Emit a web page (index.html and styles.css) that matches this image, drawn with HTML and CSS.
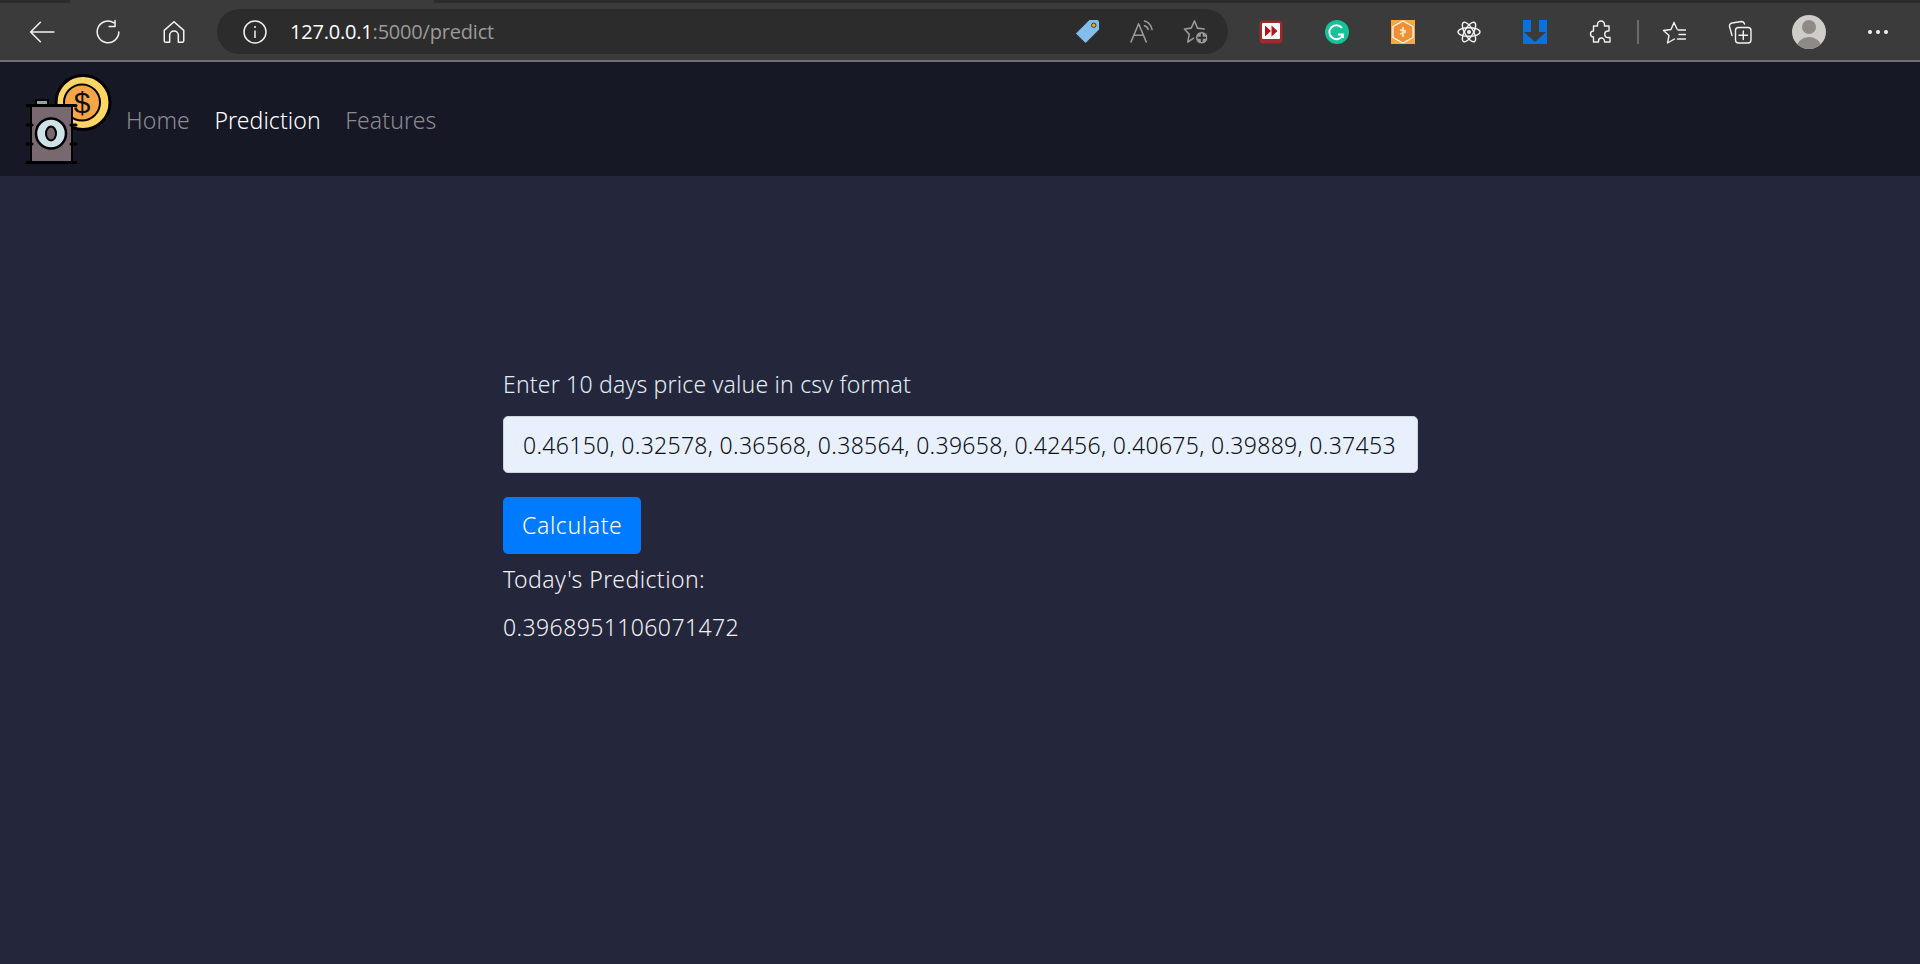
FILE: index.html
```html
<!DOCTYPE html>
<html lang="en">
<head>
<meta charset="utf-8">
<title>Prediction</title>
<link rel="stylesheet" href="styles.css">
</head>
<body>
<header class="chrome">
  <div class="tabstrip"><span class="tab"></span></div>
  <div class="toolbar">
    <svg class="ic ic-first" viewBox="0 0 24 24"><path d="M23 12H1.500M10.500 3 1.500 12l9 9"/></svg>
    <svg class="ic" viewBox="0 0 24 24"><path d="M17.500 3.500a10 10 0 1 0 4.500 8.500M18.500 1.500V7H13"/></svg>
    <svg class="ic" viewBox="0 0 24 24"><path d="M3 10.500 12 2.500l9 8V20a1.500 1.500 0 0 1-1.500 1.500H16V15a4 4 0 0 0-8 0v6.500H4.500A1.500 1.500 0 0 1 3 20z"/></svg>
    <div class="omnibox">
      <svg class="ic-info" viewBox="0 0 24 24"><circle cx="12" cy="12" r="11"/><path d="M12 10.500V18M12 6v2"/></svg>
      <span class="url"><span class="host">127.0.0.1</span>:5000/predict</span>
      <div class="omni-right">
        <svg class="ic-s" viewBox="0 0 26 26"><path class="tag" d="M15 1h8a2 2 0 0 1 2 2v8L11 25 1 15z"/><circle class="tag-dot" cx="19.500" cy="6.500" r="2.300"/></svg>
        <svg class="ic-s dim" viewBox="0 0 26 26"><path d="M2 24 10 5l8 19M5 17h10M16 2c4 1 7 4 8 9M16 7c2 .5 3.500 2 4 4"/></svg>
        <svg class="ic-s dim" viewBox="0 0 26 26"><path d="M11 20 5 24l1.500-8L1.500 10.500l7-1L12 2l3 7.500 7 1"/><circle class="plus-bg" cx="19.500" cy="19.500" r="6.500"/><path class="plus" d="M19.500 16v7M16 19.500h7"/></svg>
      </div>
    </div>
    <div class="exts">
      <svg class="ext" viewBox="0 0 24 24"><rect class="e1a" width="23" height="23" x=".5" y=".5" rx="4"/><rect class="e1b" width="18" height="16" x="3" y="3" rx="1"/><path class="e1c" d="M6 5.500l6 5.500-6 5.500zM12.500 5.500l6 5.500-6 5.500z"/></svg>
      <svg class="ext" viewBox="0 0 24 24"><circle class="e2a" cx="12" cy="12" r="12"/><path class="e2b" d="M17 8a7 7 0 1 0 1 6.500h-5M18 18v-3.500"/></svg>
      <svg class="ext" viewBox="0 0 24 24"><rect class="e3a" width="24" height="24"/><path class="e3b" d="M12 1l10 5.500v11L12 23 2 17.500v-11z"/><path class="e3c" d="M12 7v10M9 10l6 1M9 14l6-2"/></svg>
      <svg class="ext" viewBox="0 0 24 24"><g class="e4"><ellipse cx="12" cy="12" rx="11" ry="4.300"/><ellipse cx="12" cy="12" rx="11" ry="4.300" transform="rotate(60 12 12)"/><ellipse cx="12" cy="12" rx="11" ry="4.300" transform="rotate(120 12 12)"/></g><circle class="e4d" cx="12" cy="12" r="2"/></svg>
      <svg class="ext" viewBox="0 0 24 24"><rect class="e5" width="24" height="24"/><path class="e5a" d="M8 0h8v12h7L12 22 1 12h7z"/></svg>
      <svg class="ic ic-ext" viewBox="0 0 24 24"><path d="M8.500 4.500a3.500 3.500 0 0 1 7 0V6H20v5h-1a3 3 0 0 0 0 6.500h2V22h-5.500v-1a3 3 0 0 0-6 0v1H4.500v-5a3 3 0 0 1 0-6V6h4z"/></svg>
      <span class="sep"></span>
      <svg class="ic ic-fav" viewBox="0 0 24 24"><path d="M12 2.500 9 9.500l-7.500 1 5.500 5L5.500 23l7-4M12 2.500l3 6.500M16 10h7.500M17 14.500h6.500M15.500 19h8"/></svg>
      <svg class="ic ic-coll" viewBox="0 0 24 24"><path d="M4 15.500 1.500 6.500A3 3 0 0 1 4 3l9.500-1.500c1.500 0 2.500 1 3 2.500"/><rect x="7.500" y="7.500" width="15.500" height="15.500" rx="3"/><path d="M15.300 11v8.500M11 15.300h8.500"/></svg>
      <div class="avatar"><span class="a-head"></span><span class="a-body"></span></div>
      <div class="dots"><span></span><span></span><span></span></div>
    </div>
  </div>
</header>
<nav class="navbar">
  <svg class="logo" viewBox="0 0 90 95">
    <circle class="coin" cx="59" cy="30.500" r="27"/>
    <circle class="coin-in" cx="58" cy="30.500" r="18"/>
    <text class="coin-t" x="58" y="41" text-anchor="middle">$</text>
    <rect class="cap" x="12" y="28" width="12" height="5"/>
    <rect class="barrel" x="7" y="33.500" width="41" height="57"/>
    <path class="hoops" d="M3 33.500h49M3 53h5M47 53h5M3 72h5M47 72h5M3 90.500h49"/>
    <circle class="ring" cx="27" cy="61.500" r="15"/>
    <ellipse class="hole" cx="27" cy="61.500" rx="5" ry="7"/>
  </svg>
  <ul class="navlinks">
    <li><a class="navlink" href="#">Home</a></li>
    <li><a class="navlink active" href="#">Prediction</a></li>
    <li><a class="navlink feat" href="#">Features</a></li>
  </ul>
</nav>
<main class="content">
  <form class="form">
    <label class="label" for="csv">Enter 10 days price value in csv format</label>
    <input class="input" id="csv" type="text" value="0.46150, 0.32578, 0.36568, 0.38564, 0.39658, 0.42456, 0.40675, 0.39889, 0.37453">
    <button class="btn" type="button">Calculate</button>
    <p class="res res-title">Today's Prediction:</p>
    <p class="res res-num">0.3968951106071472</p>
  </form>
</main>
</body>
</html>
```
FILE: styles.css
```css
* { box-sizing: border-box; }
html, body { margin: 0; height: 100%; }
body {
  background: #24273b;
  font-family: "Noto Sans", "Open Sans", sans-serif;
  font-weight: 300;
  color: #e8eaf0;
  overflow: hidden;
}
.chrome { height: 62px; background: #3b3b3b; border-bottom: 2px solid #6f6f6f; }
.tabstrip { height: 3px; background: #2b2b2b; }
.tab { display: block; width: 364px; height: 3px; margin-left: 70px; background: #3b3b3b; }
.toolbar { display: flex; align-items: center; height: 57px; }
.ic { width: 26px; height: 26px; fill: none; stroke: #f2f2f2; stroke-width: 1.4; stroke-linejoin: round; stroke-linecap: round; margin-left: 40px; flex: none; }
.ic-first { margin-left: 29px; }
.omnibox {
  display: flex; align-items: center;
  width: 1011px; height: 45px; margin-left: 30px;
  background: #2c2c2c; border-radius: 23px; padding-left: 26px;
}
.ic-info { width: 24px; height: 24px; fill: none; stroke: #f0f0f0; stroke-width: 1.500; flex: none; }
.url { margin-left: 23px; font-family: "Open Sans", sans-serif; font-weight: 400; font-size: 20px; color: #9a9a9a; letter-spacing: -.2px; }
.host { color: #fff; }
.omni-right { display: flex; align-items: center; gap: 29px; margin-left: auto; margin-right: 20px; }
.ic-s { width: 25px; height: 25px; flex: none; }
.tag { fill: #84bcea; }
.tag-dot { fill: #e0b41c; stroke: #333; stroke-width: 1; }
.dim { fill: none; stroke: #9a9a9a; stroke-width: 1.600; stroke-linecap: round; stroke-linejoin: round; }
.plus-bg { fill: #9a9a9a; stroke: #2c2c2c; stroke-width: 1; }
.plus { stroke: #2c2c2c; stroke-width: 2; }
.exts { display: flex; align-items: center; margin-left: 31px; }
.ext { width: 24px; height: 24px; margin-right: 42px; flex: none; }
.e1a { fill: #9e2a2b; }
.e1b { fill: #fff; }
.e1c { fill: #b3161b; }
.e2a { fill: #15c39a; }
.e2b { fill: none; stroke: #fff; stroke-width: 2; }
.e3a { fill: #f8a83f; }
.e3b { fill: #f08f34; stroke: #fff; stroke-width: 1.200; }
.e3c { fill: none; stroke: #ffe1b8; stroke-width: 1.800; }
.e4 { fill: none; stroke: #f2f2f2; stroke-width: 1.400; }
.e4d { fill: #f2f2f2; }
.e5 { fill: #0a73db; }
.e5a { fill: #3b3b3b; }
.ic-ext, .ic-fav, .ic-coll { width: 24px; height: 24px; }
.ic-ext { margin-left: 0; }
.sep { width: 2px; height: 24px; background: #6a6a6a; margin-left: 24px; flex: none; }
.ic-fav { margin-left: 23px; }
.ic-coll { margin-left: 42px; }
.avatar {
  position: relative; width: 34px; height: 34px; margin-left: 40px;
  border-radius: 50%; background: #cfcdc9; overflow: hidden; flex: none;
}
.a-head { position: absolute; left: 10px; top: 5px; width: 14px; height: 14px; border-radius: 50%; background: #8e8b86; }
.a-body { position: absolute; left: 5px; top: 22px; width: 24px; height: 20px; border-radius: 50%; background: #8e8b86; }
.dots { display: flex; gap: 4px; margin-left: 42px; }
.dots span { width: 4px; height: 4px; border-radius: 50%; background: #f2f2f2; }
.navbar {
  display: flex; align-items: center;
  height: 114px; background: #171826; padding-left: 24px;
}
.logo { width: 90px; height: 95px; flex: none; }
.coin { fill: #ffd664; stroke: #000; stroke-width: 3; }
.coin-in { fill: #f8a548; stroke: #000; stroke-width: 2; }
.coin-t { font-family: "Liberation Sans", sans-serif; font-size: 30px; font-weight: 400; fill: #111; }
.cap { fill: #8fa3ad; stroke: #000; stroke-width: 2; }
.barrel { fill: #77696f; stroke: #000; stroke-width: 2; }
.hoops { fill: none; stroke: #000; stroke-width: 3; stroke-linecap: round; }
.ring { fill: #cfe2ea; stroke: #000; stroke-width: 2.500; }
.hole { fill: #77696f; stroke: #000; stroke-width: 2; }
.navlinks { display: flex; gap: 24.500px; list-style: none; margin: 1px 0 0 12px; padding: 0; }
.navlink { font-size: 23px; letter-spacing: .1px; color: #8b8b92; text-decoration: none; }
.navlink.active { color: #fff; }
.content { padding: 0 503px; }
.form { display: flex; flex-direction: column; align-items: flex-start; padding-top: 193px; }
.label { font-size: 23px; letter-spacing: .19px; line-height: 30px; color: #e0ecf5; margin-bottom: 17px; }
.input {
  width: 915px; height: 57px; padding: 0 19px;
  background: #e8f0fe; border: 1px solid #ced4da; border-radius: 5px;
  font-family: inherit; font-weight: 300; font-size: 23px; letter-spacing: .3px; color: #0d1015;
}
.btn {
  height: 57px; margin-top: 24px; padding: 0 19px 2px;
  background: #007bff; border: 0; border-radius: 5px;
  font-family: inherit; font-weight: 300; font-size: 23px; letter-spacing: .61px; color: #fff;
}
.res { margin: 0; font-size: 23px; line-height: 48px; color: #f0f0f4; }
.res-title { margin-top: 1px; letter-spacing: .45px; }
.res-num { letter-spacing: .4px; }
```
